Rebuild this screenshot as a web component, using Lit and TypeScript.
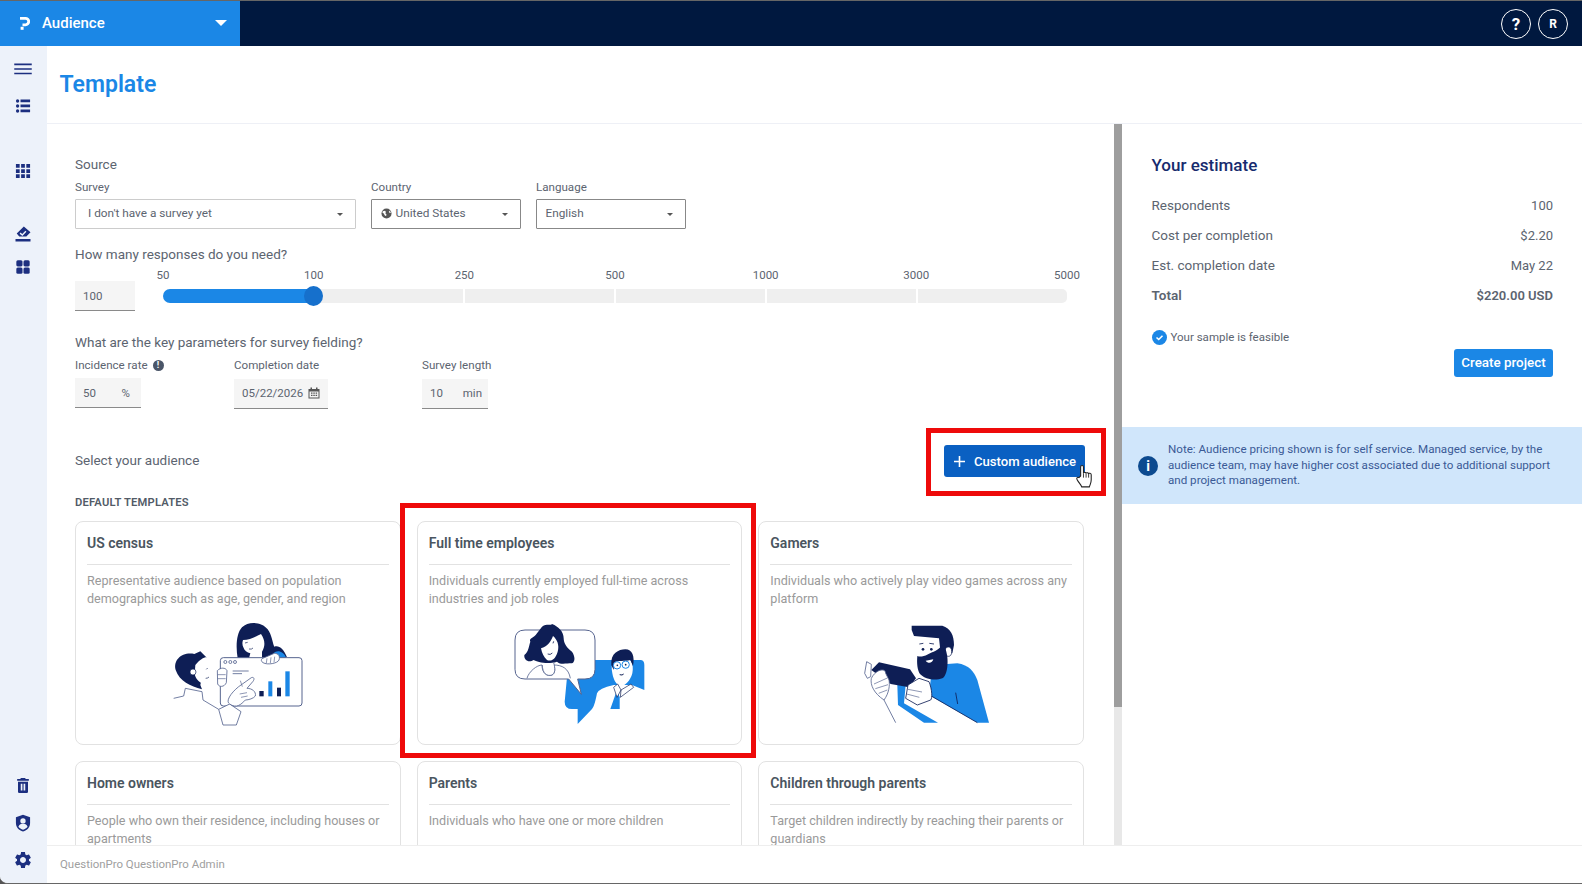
import { LitElement, html, css, svg } from "lit";
import { customElement } from "lit/decorators.js";

const NAVY = "#0e1e55";
const LINE = "#56648f";
const BLUE = "#1b87e6";

const censusArt = svg`
  <path d="M262 145C256 110 258 70 275 52C295 32 335 36 352 58C365 75 366 98 372 110C385 105 400 115 410 142Z" fill="${NAVY}"/>
  <path d="M362 145C364 122 395 112 408 145Z" fill="${BLUE}"/>
  <path d="M278 90C300 90 320 77 332 72C345 90 345 110 335 125L335 145H296L300 130C290 128 282 122 279 112C276 106 275 98 278 90Z" fill="#fff"/>
  <path d="M284 99l8-2M296 117q8 2 12-3" stroke="${NAVY}" stroke-width="2" fill="none"/>
  <rect x="210" y="143" width="245" height="145" rx="9" fill="#fff" stroke="${LINE}" stroke-width="3"/>
  <path d="M335 146L372 130C384 130 390 138 386 150C382 160 352 166 338 158C332 154 332 150 335 146Z" fill="#fff" stroke="${LINE}" stroke-width="2.5"/>
  <path d="M350 145l-2 14M362 142l-2 17M373 140l-2 17" stroke="${LINE}" stroke-width="2" fill="none"/>
  <circle cx="225" cy="156" r="4.5" fill="none" stroke="${LINE}" stroke-width="2.5"/>
  <circle cx="240" cy="156" r="4.5" fill="none" stroke="${LINE}" stroke-width="2.5"/>
  <circle cx="254" cy="156" r="4.5" fill="none" stroke="${LINE}" stroke-width="2.5"/>
  <path d="M247 183h48M247 191h28" stroke="${LINE}" stroke-width="2.5"/>
  <rect x="327" y="243" width="13" height="16" fill="${NAVY}"/>
  <rect x="354" y="214" width="12" height="45" fill="${BLUE}"/>
  <rect x="380" y="233" width="12" height="26" fill="${NAVY}"/>
  <rect x="405" y="184" width="13" height="75" fill="${BLUE}"/>
  <path d="M201 182C210 172 226 172 230 182L228 218C222 232 206 232 202 222Z" fill="#fff" stroke="${LINE}" stroke-width="2.5"/>
  <path d="M202 194h24M202 206h24" stroke="${LINE}" stroke-width="2" fill="none"/>
  <path d="M70 265L100 258L105 235L155 245L158 270L205 298L238 282L272 305L258 345H218L205 298" fill="#fff" stroke="${LINE}" stroke-width="2.5"/>
  <path d="M238 282C225 275 240 250 265 230L303 203C310 200 314 206 308 214L290 235C305 235 318 245 315 258C310 265 295 270 285 270C272 284 258 296 238 282Z" fill="#fff" stroke="${LINE}" stroke-width="2.5"/>
  <path d="M270 212l6 18M268 252l22-4M272 262l20-4" stroke="${LINE}" stroke-width="2" fill="none"/>
  <path d="M76 180C68 150 95 125 132 132L150 124L168 142L150 225L155 238C120 228 88 215 76 180Z" fill="${NAVY}"/>
  <path d="M135 165C148 150 160 142 168 142C180 165 190 185 184 196C178 208 170 216 157 222C145 215 135 205 133 192Z" fill="#fff"/>
  <circle cx="128" cy="186" r="9" fill="#fff" stroke="${NAVY}" stroke-width="2"/>
  <path d="M168 178l4-4M166 205q6 0 10-4" stroke="${NAVY}" stroke-width="2" fill="none"/>
`;

const employeesArt = svg`
  <path d="M205 150H420Q432 150 432 165V240L395 225H340Q295 235 290 250C285 275 282 288 275 297L232 342V297H215Q193 297 193 275Z" fill="${BLUE}"/>
  <path d="M350 240L358 262V297H330Z" fill="${BLUE}"/>
  <path d="M336 190C330 160 340 140 365 140C390 140 402 160 396 190C390 212 375 228 362 228C350 228 340 212 336 190Z" fill="#fff"/>
  <path d="M333 165C330 130 355 118 375 118C396 118 404 140 398 168L390 150C375 155 350 150 342 158L340 180Z" fill="${NAVY}"/>
  <circle cx="350" cy="166" r="11" fill="#fff" stroke="${BLUE}" stroke-width="3"/>
  <circle cx="376" cy="164" r="11" fill="#fff" stroke="${BLUE}" stroke-width="3"/>
  <circle cx="351" cy="166" r="2.5" fill="${NAVY}"/><circle cx="376" cy="164" r="2.5" fill="${NAVY}"/>
  <path d="M358 194q8 3 12-2" stroke="${NAVY}" stroke-width="3" fill="none"/>
  <path d="M340 232L352 222L362 240L350 262ZM362 240L392 222L400 232L360 262Z" fill="#fff" stroke="${NAVY}" stroke-width="2"/>
  <path d="M74 60H254Q284 60 284 90V178Q284 207 254 207H232L243 253L205 207H74Q44 207 44 178V90Q44 60 74 60Z" fill="#fff" stroke="${LINE}" stroke-width="3"/>
  <path d="M80 205C85 185 110 165 125 165C125 190 140 200 155 195C165 190 165 175 160 165C185 165 205 175 210 205" fill="none" stroke="${LINE}" stroke-width="2.5"/>
  <path d="M125 50C140 40 150 48 155 42C175 50 190 65 190 85C190 100 200 115 215 125C225 140 225 155 215 160C195 160 180 165 170 155C140 165 110 155 100 150C85 160 70 150 72 135C85 125 85 110 90 95C85 85 100 85 110 70Z" fill="${NAVY}"/>
  <path d="M122 115C140 110 152 95 158 78C170 88 178 105 172 125C165 150 150 155 140 150C130 140 125 130 122 115Z" fill="#fff"/>
  <path d="M126 165C126 190 140 200 155 195C165 190 165 175 160 158" fill="#fff" stroke="${LINE}" stroke-width="2.5"/>
  <path d="M158 100l2-6M142 132q8 4 14-3" stroke="${NAVY}" stroke-width="2.5" fill="none"/>
`;

const gamerArt = svg`
  <path d="M250 165L320 160C355 165 370 185 380 210L415 338H380L235 255L240 210Z" fill="${BLUE}"/>
  <path d="M140 225H165L160 280L262 338H220L142 285Z" fill="${BLUE}"/>
  <path d="M240 257L380 338" stroke="${NAVY}" stroke-width="2.5"/>
  <path d="M315 248L321 282" stroke="${NAVY}" stroke-width="2.5"/>
  <path d="M195 80H272L268 145L200 145Z" fill="#fff"/>
  <path d="M183 47H275C300 55 310 75 310 105L305 130H270L265 85L190 78L183 60Z" fill="${NAVY}"/>
  <ellipse cx="293" cy="125" rx="10" ry="14" fill="#fff" stroke="${NAVY}" stroke-width="2"/>
  <path d="M200 138C215 145 235 130 255 122C265 118 272 108 280 100L287 125C294 150 292 195 275 205C255 212 225 210 208 192C200 180 198 160 200 138Z" fill="${NAVY}"/>
  <path d="M225 152L248 148C245 160 232 162 225 152Z" fill="#fff"/>
  <circle cx="217" cy="118" r="4" fill="${NAVY}"/><circle cx="242" cy="118" r="4" fill="${NAVY}"/>
  <path d="M206 102l12-2M236 100l14 2" stroke="${NAVY}" stroke-width="2.5" fill="none"/>
  <path d="M48 155L62 163L60 200L50 205L42 190Z" fill="#fff" stroke="${LINE}" stroke-width="2.5"/>
  <path d="M62 180L85 157L178 178L196 205L175 232L120 222Z" fill="${NAVY}"/>
  <path d="M62 205C75 178 105 172 105 190L115 210C118 225 115 250 100 270L135 338" fill="#fff" stroke="${LINE}" stroke-width="2.5"/>
  <path d="M62 205C58 225 70 250 100 270" fill="none" stroke="${LINE}" stroke-width="2.5"/>
  <path d="M70 222l40-18M74 236l38-12M84 250l26-10" stroke="${LINE}" stroke-width="2" fill="none"/>
  <path d="M172 225L205 205L235 215C245 240 245 265 240 270L200 285L165 265Z" fill="#fff" stroke="${NAVY}" stroke-width="2.5"/>
  <path d="M172 238l42 8M168 252l38 10" stroke="${LINE}" stroke-width="2" fill="none"/>
`;

const cards = [
  { title: "US census", text: "Representative audience based on population demographics such as age, gender, and region", art: censusArt, vx: 8 },
  { title: "Full time employees", text: "Individuals currently employed full-time across industries and job roles", art: employeesArt, vx: -19, marked: true },
  { title: "Gamers", text: "Individuals who actively play video games across any platform", art: gamerArt, vx: -44 },
  { title: "Home owners", text: "People who own their residence, including houses or apartments" },
  { title: "Parents", text: "Individuals who have one or more children" },
  { title: "Children through parents", text: "Target children indirectly by reaching their parents or guardians" },
];

const scale = ["50", "100", "250", "500", "1000", "3000", "5000"];

const estimate = [
  ["Respondents", "100"],
  ["Cost per completion", "$2.20"],
  ["Est. completion date", "May 22"],
];

@customElement("app-root")
export class AppRoot extends LitElement {
  static styles = css`
    :host {
      display: block;
      height: 100vh;
      background: #555;
      font-family: Roboto, "Noto Sans", sans-serif;
      color: #5c6470;
    }

    * {
      box-sizing: border-box;
    }

    .app {
      height: 100%;
      display: flex;
      flex-direction: column;
      background: #fff;
      border-top: 1px solid #666;
      border-bottom: 1px solid #666;
      border-bottom-left-radius: 8px;
      overflow: hidden;
    }

    .topbar {
      height: 45px;
      flex: none;
      display: flex;
      align-items: center;
      background: #00183f;
      color: #fff;
    }

    .module {
      width: 240px;
      height: 100%;
      display: flex;
      align-items: center;
      padding: 0 13px 1px 20px;
      background: #1b87e6;
      font-size: 15px;
      font-weight: 500;
    }

    .module svg {
      margin-right: 12px;
    }

    .module .caret {
      margin-left: auto;
      border-top: 6px solid #fff;
      border-left: 6px solid transparent;
      border-right: 6px solid transparent;
    }

    .top-actions {
      margin-left: auto;
      display: flex;
      gap: 7px;
      padding-right: 14px;
    }

    .round {
      width: 30px;
      height: 30px;
      border: 1.5px solid #fff;
      border-radius: 50%;
      display: flex;
      align-items: center;
      justify-content: center;
      font-weight: 700;
    }

    .round.help {
      font-size: 17px;
    }

    .round.user {
      font-size: 12px;
    }

    .body {
      flex: 1;
      min-height: 0;
      display: flex;
    }

    .sidebar {
      width: 47px;
      flex: none;
      display: flex;
      flex-direction: column;
      align-items: center;
      padding: 13px 2px 13px 0;
      background: #edf2fa;
      color: #1c2f80;
    }

    .sidebar svg {
      display: block;
      width: 20px;
      height: 20px;
    }

    .s-list { margin-top: 17px; }
    .s-apps { margin-top: 45px; }
    .s-stamp { margin-top: 43px; }
    .s-tiles { margin-top: 13px; }
    .s-trash { margin-top: auto; }
    .s-shield { margin-top: 18px; }
    .s-gear { margin-top: 17px; }

    main {
      flex: 1;
      min-width: 0;
      display: flex;
      flex-direction: column;
    }

    .page-head {
      height: 78px;
      flex: none;
      display: flex;
      align-items: center;
      padding: 0 13px 1px 12.500px;
      border-bottom: 1px solid #eef0f6;
    }

    h1 {
      margin: 0;
      font-size: 23px;
      font-weight: 600;
      color: #1b87e6;
    }

    .columns {
      flex: 1;
      min-height: 0;
      display: flex;
    }

    .left {
      width: 1067px;
      flex: none;
      padding: 31px 30px 0 28px;
      overflow: hidden;
    }

    .scroll {
      width: 8px;
      flex: none;
      background: #e8e8e8;
    }

    .scroll div {
      height: 583px;
      background: #9e9e9e;
    }

    .right {
      flex: 1;
      min-width: 0;
    }

    .q {
      font-size: 13.500px;
      line-height: 18px;
    }

    .lbl {
      display: flex;
      align-items: center;
      gap: 5px;
      font-size: 11.600px;
      line-height: 16px;
    }

    .src-row {
      display: flex;
      gap: 15px;
      margin-top: 6px;
    }

    .select {
      height: 30px;
      margin-top: 4px;
      display: flex;
      align-items: center;
      border: 1px solid #888;
      border-radius: 1px;
      padding: 0 12px 2px 8.500px;
      font-size: 11.800px;
      background: #fff;
    }

    .select svg {
      margin-right: 4px;
    }

    .select::after {
      content: "";
      margin-left: auto;
      margin-top: 2px;
      border-top: 3.500px solid #555;
      border-left: 3.500px solid transparent;
      border-right: 3.500px solid transparent;
    }

    .select.soft {
      width: 281px;
      padding-left: 12px;
      border-color: #ccc;
    }

    .select.mid {
      width: 150px;
    }

    .resp {
      margin-top: 16px;
    }

    .slider-row {
      display: flex;
      gap: 28px;
      margin-top: 4px;
    }

    .input {
      height: 30px;
      display: flex;
      align-items: center;
      justify-content: space-between;
      padding: 0 8px;
      background: #f5f5f5;
      border-bottom: 1px solid #8a8a8a;
      font-size: 11.500px;
    }

    .input.num {
      width: 60px;
      margin-top: 14px;
    }

    .slider {
      width: 904px;
    }

    .marks {
      display: flex;
      justify-content: space-between;
      height: 16px;
      font-size: 11.500px;
      line-height: 16px;
    }

    .marks span {
      width: 0;
      display: flex;
      justify-content: center;
    }

    .track {
      position: relative;
      display: flex;
      gap: 2px;
      height: 14px;
      margin-top: 6px;
      border-radius: 7px 5px 5px 7px;
      overflow: hidden;
    }

    .track div {
      flex: 1;
      background: #efefef;
    }

    .track .on {
      background: #1b87e6;
    }

    .slider-wrap {
      position: relative;
    }

    .thumb {
      position: absolute;
      left: 141px;
      top: 19px;
      width: 19px;
      height: 20px;
      border-radius: 50%;
      background: #1670cc;
    }

    .params {
      margin-top: 22px;
    }

    .param-row {
      display: grid;
      grid-template-columns: 159px 188px auto;
      margin-top: 6px;
    }

    .param-row .input {
      margin-top: 5px;
    }

    .param-row .low {
      margin-top: 6px;
      padding-bottom: 2px;
    }

    .input.rate { width: 66px; padding-right: 11px; }
    .input.date { width: 94px; padding-right: 8px; }
    .input.len { width: 66px; padding-right: 6px; }

    .info {
      width: 11px;
      height: 11px;
      border-radius: 50%;
      background: #4a5568;
      color: #fff;
      font-size: 9px;
      font-weight: 700;
      line-height: 11px;
      text-align: center;
    }

    .aud-row {
      display: flex;
      align-items: center;
      justify-content: space-between;
      margin-top: 36px;
    }

    .aud-row .q {
      padding-bottom: 2px;
    }

    .custom {
      position: relative;
      width: 141px;
      height: 32px;
      margin-right: -1px;
      display: flex;
      align-items: center;
      gap: 8px;
      padding-left: 9px;
      border-radius: 3px;
      background: #0a60c2;
      color: #fff;
      font-size: 13.100px;
      font-weight: 500;
      white-space: nowrap;
    }

    .custom::before {
      content: "";
      position: absolute;
      left: -18px;
      right: -21px;
      top: -17px;
      bottom: -19px;
      border: 5px solid #ee0a0a;
    }

    .hand {
      position: absolute;
      left: 131px;
      top: 19px;
    }

    .group {
      margin-top: 18px;
      font-size: 11.200px;
      font-weight: 600;
      line-height: 16px;
      letter-spacing: 0.2px;
      color: #525b67;
    }

    .grid {
      display: grid;
      grid-template-columns: repeat(3, 1fr);
      grid-auto-rows: 224px;
      gap: 16px;
      margin-top: 10px;
    }

    .card {
      position: relative;
      padding: 12px 11px;
      border: 1px solid #e2e2e2;
      border-radius: 8px;
      background: #fff;
    }

    .card.marked::before {
      content: "";
      position: absolute;
      left: -18px;
      right: -15px;
      top: -19px;
      bottom: -14px;
      border: 5px solid #ee0a0a;
      pointer-events: none;
    }

    .card h3 {
      margin: 0;
      padding-bottom: 12px;
      border-bottom: 1px solid #e2e2e2;
      font-size: 14px;
      font-weight: 600;
      line-height: 18px;
      color: #4a5560;
    }

    .card p {
      margin: 7px 0 0;
      font-size: 12.600px;
      line-height: 18px;
      color: #9a9a9a;
    }

    .card svg {
      display: block;
      margin: 2px auto 0;
    }

    .estimate {
      padding: 31px 29px 0 29.500px;
    }

    h2 {
      margin: 0 0 15px;
      font-size: 17px;
      font-weight: 500;
      line-height: 20px;
      color: #172b6e;
    }

    .est-row {
      display: flex;
      justify-content: space-between;
      height: 30px;
      align-items: center;
      font-size: 13.500px;
    }

    .est-row span:last-child {
      font-size: 13px;
    }

    .est-row.total {
      font-weight: 600;
    }

    .ok {
      display: flex;
      align-items: center;
      gap: 4px;
      margin-top: 19px;
      font-size: 11.500px;
      line-height: 16px;
    }

    .create {
      width: 99px;
      height: 28px;
      margin: 4px 0 0 auto;
      padding-bottom: 2px;
      display: flex;
      align-items: center;
      justify-content: center;
      border-radius: 3px;
      background: #1b87e6;
      color: #fff;
      font-size: 13.400px;
      font-weight: 500;
    }

    .note {
      height: 77px;
      margin-top: 50px;
      display: flex;
      align-items: center;
      gap: 10px;
      padding: 0 16px;
      background: #d0e6fb;
      color: #3a5a96;
      font-size: 11.600px;
      line-height: 15.500px;
    }

    .note .dot {
      width: 20px;
      height: 20px;
      flex: none;
      border-radius: 50%;
      background: #0c4a8f;
      color: #fff;
      font-size: 14px;
      font-weight: 700;
      line-height: 20px;
      text-align: center;
    }

    footer {
      height: 38px;
      flex: none;
      display: flex;
      align-items: center;
      padding: 0 13px 2px;
      border-top: 1px solid #eee;
      font-size: 11.450px;
      color: #a0a0a0;
      background: #fff;
    }
  `;

  renderSidebar() {
    return html`<nav class="sidebar">
      <svg viewBox="0 0 24 24" fill="currentColor"><path d="M1.500 5.500h21v1.900h-21zM1.500 11h21v1.900h-21zM1.500 16.500h21v1.900h-21z" /></svg>
      <svg class="s-list" viewBox="0 0 24 24" fill="currentColor"><circle cx="5.500" cy="6" r="2" /><circle cx="5.500" cy="12" r="2" /><circle cx="5.500" cy="18" r="2" /><path d="M9 4.200h11.500v3.400H9zM9 10.200h11.500v3.400H9zM9 16.200h11.500v3.400H9z" /></svg>
      <svg class="s-apps" viewBox="0 0 24 24" fill="currentColor"><path d="M3.500 3.500h4.500v4.500h-4.500zM9.750 3.500h4.500v4.500h-4.500zM16 3.500h4.500v4.500h-4.500zM3.500 9.750h4.500v4.500h-4.500zM9.750 9.750h4.500v4.500h-4.500zM16 9.750h4.500v4.500h-4.500zM3.500 16h4.500v4.500h-4.500zM9.750 16h4.500v4.500h-4.500zM16 16h4.500v4.500h-4.500z" /></svg>
      <svg class="s-stamp" viewBox="0 0 24 24" fill="currentColor"><path d="M13 3l8 7-5 5H7.500l-3-3.500zM3 18h18v3H3z" /><path d="M8.500 11l2.700 2.200 4.300-4.400" fill="none" stroke="#edf2fa" stroke-width="1.700" /></svg>
      <svg class="s-tiles" viewBox="0 0 24 24" fill="currentColor"><rect x="4" y="4" width="7.400" height="7.400" rx="1.800" /><rect x="12.600" y="4" width="7.400" height="7.400" rx="1.800" /><rect x="4" y="12.600" width="7.400" height="7.400" rx="1.800" /><rect x="12.600" y="12.600" width="7.400" height="7.400" rx="1.800" /></svg>
      <svg class="s-trash" viewBox="0 0 24 24" fill="currentColor"><path d="M9.500 3.500h5l.8 1.200H19v2.300H5V4.700h3.700zM6 8h12v12a1.500 1.500 0 0 1-1.500 1.500h-9A1.500 1.500 0 0 1 6 20zM9.300 10.500v8h2v-8zM12.700 10.500v8h2v-8z" fill-rule="evenodd" /></svg>
      <svg class="s-shield" viewBox="0 0 24 24" fill="currentColor"><path d="M12 2l8.500 3V12c0 5-3.500 8.800-8.500 10.300C7 20.800 3.500 17 3.500 12V5z" /><circle cx="12" cy="9.500" r="3.200" fill="#edf2fa" /><path d="M6.500 16.500c1-2.700 3.200-3.500 5.500-3.500s4.500.8 5.500 3.500c-1.300 1.700-3.300 2.900-5.500 3.500-2.200-.6-4.200-1.800-5.500-3.500z" fill="#edf2fa" /></svg>
      <svg class="s-gear" viewBox="0 0 24 24" fill="currentColor"><path d="M19.140 12.940c.04-.3.06-.61.06-.94 0-.32-.02-.64-.07-.94l2.030-1.580c.18-.14.23-.41.12-.61l-1.920-3.320c-.12-.22-.37-.29-.59-.22l-2.390.96c-.5-.38-1.030-.7-1.620-.94l-.36-2.540c-.04-.24-.24-.41-.48-.41h-3.840c-.24 0-.43.17-.47.41l-.36 2.540c-.59.24-1.130.57-1.620.94l-2.390-.96c-.22-.08-.47 0-.59.22L2.740 8.870c-.12.21-.08.47.12.61l2.030 1.580c-.05.3-.09.63-.09.94s.02.64.07.94l-2.030 1.580c-.18.14-.23.41-.12.61l1.920 3.320c.12.22.37.29.59.22l2.390-.96c.5.38 1.030.7 1.620.94l.36 2.540c.05.24.24.41.48.41h3.840c.24 0 .44-.17.47-.41l.36-2.540c.59-.24 1.130-.56 1.620-.94l2.390.96c.22.08.47 0 .59-.22l1.920-3.320c.12-.22.07-.47-.12-.61l-2.010-1.580zM12 15.600c-1.980 0-3.600-1.620-3.600-3.600s1.620-3.600 3.600-3.600 3.600 1.620 3.600 3.600-1.620 3.600-3.600 3.600z" /></svg>
    </nav>`;
  }

  renderCard(c: any) {
    return html`<div class="card ${c.marked ? "marked" : ""}">
      <h3>${c.title}</h3>
      <p>${c.text}</p>
      ${c.art
        ? html`<svg width="170" height="125" viewBox="${c.vx} 0 510 375">${c.art}</svg>`
        : ""}
    </div>`;
  }

  render() {
    return html`<div class="app">
      <header class="topbar">
        <div class="module">
          <svg width="10" height="13" viewBox="0 0 10 13" fill="none">
            <path d="M0 1.400h5.500a3 3 0 0 1 0 6.400H2.500" stroke="#fff" stroke-width="2.800" />
            <rect x="0.600" y="9.800" width="3" height="3" fill="#fff" />
          </svg>
          Audience
          <span class="caret"></span>
        </div>
        <div class="top-actions">
          <div class="round help">?</div>
          <div class="round user">R</div>
        </div>
      </header>
      <div class="body">
        ${this.renderSidebar()}
        <main>
          <div class="page-head"><h1>Template</h1></div>
          <div class="columns">
            <section class="left">
              <div class="q">Source</div>
              <div class="src-row">
                <div>
                  <div class="lbl">Survey</div>
                  <div class="select soft">I don't have a survey yet</div>
                </div>
                <div>
                  <div class="lbl">Country</div>
                  <div class="select mid">
                    <svg width="11" height="11" viewBox="0 0 12 12">
                      <circle cx="6" cy="6" r="5.500" fill="#555" />
                      <path d="M2 3.500l2.500-.5 1 1.500-1 1 1.500 1.500-.5 2-1.500-1-1-2-1.500-1zM8 1.500l1.500 1.500-1 1 1 1.500 1.500-.5" fill="#fff" />
                    </svg>
                    United States
                  </div>
                </div>
                <div>
                  <div class="lbl">Language</div>
                  <div class="select mid">English</div>
                </div>
              </div>

              <div class="q resp">How many responses do you need?</div>
              <div class="slider-row">
                <div class="input num">100</div>
                <div class="slider slider-wrap">
                  <div class="marks">${scale.map((s) => html`<span>${s}</span>`)}</div>
                  <div class="track">
                    <div class="on"></div>
                    <div></div>
                    <div></div>
                    <div></div>
                    <div></div>
                    <div></div>
                  </div>
                  <div class="thumb"></div>
                </div>
              </div>

              <div class="q params">What are the key parameters for survey fielding?</div>
              <div class="param-row">
                <div>
                  <div class="lbl">Incidence rate <span class="info">!</span></div>
                  <div class="input rate"><span>50</span><span>%</span></div>
                </div>
                <div>
                  <div class="lbl">Completion date</div>
                  <div class="input date low">
                    <span>05/22/2026</span>
                    <svg width="12" height="12" viewBox="0 0 12 12" fill="#555">
                      <path d="M0.500 2h11v9.500h-11zM1.500 4.500v6h9v-6z" fill-rule="evenodd" />
                      <path d="M2.500 0.500h1.500v2h-1.500zM8 0.500h1.500v2h-1.500zM3 5.500h1.500v1.200h-1.500zM5.300 5.500h1.500v1.200h-1.500zM7.600 5.500h1.500v1.200h-1.500zM3 7.800h1.500v1.200h-1.500zM5.300 7.800h1.500v1.200h-1.500zM7.600 7.800h1.500v1.200h-1.500z" />
                    </svg>
                  </div>
                </div>
                <div>
                  <div class="lbl">Survey length</div>
                  <div class="input len low"><span>10</span><span>min</span></div>
                </div>
              </div>

              <div class="aud-row">
                <div class="q">Select your audience</div>
                <div class="custom">
                  <svg width="13" height="13" viewBox="0 0 13 13"><path d="M6.500 1v11M1 6.500h11" stroke="#fff" stroke-width="1.600" /></svg>
                  Custom audience
                  <svg class="hand" width="20" height="24" viewBox="0 0 18 22">
                    <path d="M5 11V2.500C5 1 7.600 1 7.600 2.500V8.500C7.600 7.300 10 7.300 10 8.800C10 7.600 12.300 7.600 12.300 9.200C12.500 8 14.700 8.200 14.700 9.800V14.500C14.700 17.500 13.700 18.500 13 21H6C5.500 19 3.500 17.500 1.800 14.500C0.800 12.800 2.200 11.500 3.500 12.500Z" fill="#fff" stroke="#222" stroke-width="1" />
                    <path d="M7.600 8.500v4M10 8.800v3.700M12.300 9.200v3.300" stroke="#222" stroke-width="0.800" fill="none" />
                  </svg>
                </div>
              </div>

              <div class="group">DEFAULT TEMPLATES</div>
              <div class="grid">${cards.map((c) => this.renderCard(c))}</div>
            </section>
            <div class="scroll"><div></div></div>
            <aside class="right">
              <div class="estimate">
                <h2>Your estimate</h2>
                ${estimate.map(
                  ([k, v]) => html`<div class="est-row"><span>${k}</span><span>${v}</span></div>`
                )}
                <div class="est-row total"><span>Total</span><span>$220.00 USD</span></div>
                <div class="ok">
                  <svg width="15" height="15" viewBox="0 0 15 15">
                    <circle cx="7.500" cy="7.500" r="7.500" fill="#1b87e6" />
                    <path d="M4.500 7.500l2.200 2 3.800-3.800" fill="none" stroke="#fff" stroke-width="1.600" />
                  </svg>
                  Your sample is feasible
                </div>
                <div class="create">Create project</div>
              </div>
              <div class="note">
                <div class="dot">i</div>
                <div>
                  Note: Audience pricing shown is for self service. Managed service, by the
                  audience team, may have higher cost associated due to additional support
                  and project management.
                </div>
              </div>
            </aside>
          </div>
          <footer>QuestionPro QuestionPro Admin</footer>
        </main>
      </div>
    </div>`;
  }
}
